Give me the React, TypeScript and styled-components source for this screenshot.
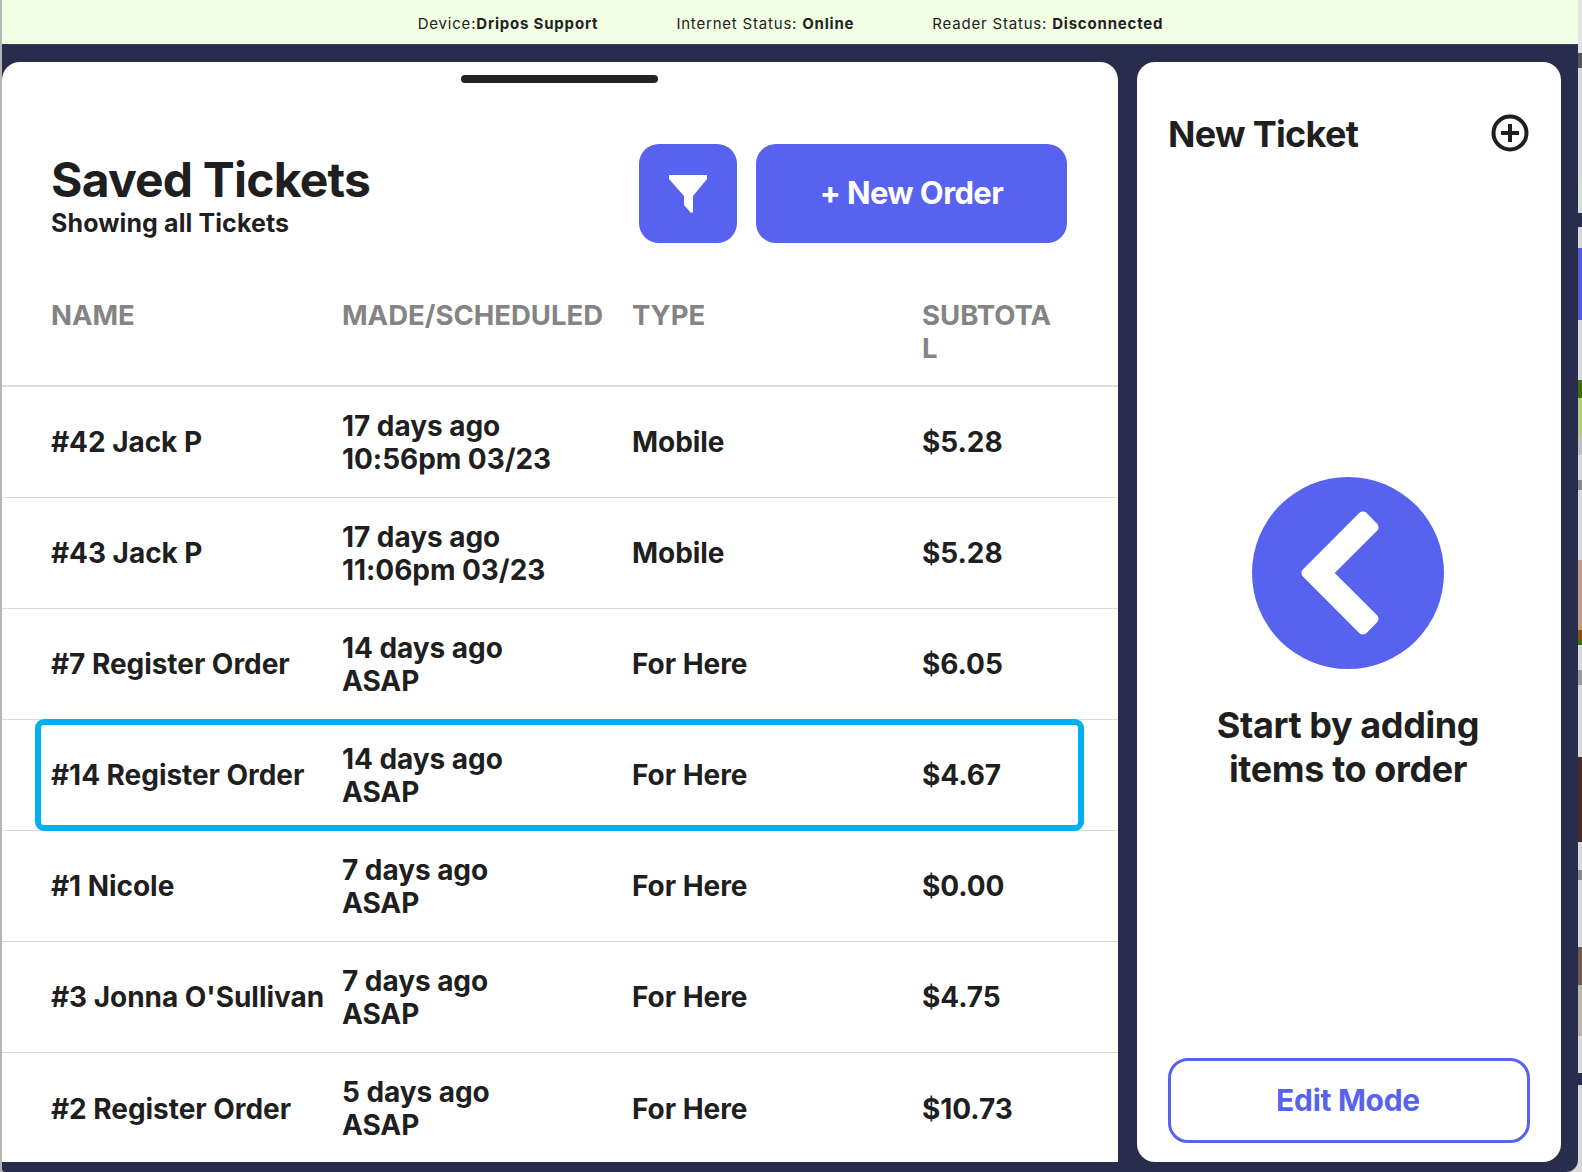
import React from "react";
import styled, { createGlobalStyle } from "styled-components";

const Global = createGlobalStyle`
  html, body { margin: 0; padding: 0; width: 1582px; height: 1172px; overflow: hidden; background: #d8d8d8; }
  * { box-sizing: border-box; }
  body { font-family: Inter, "Liberation Sans", sans-serif; color: #1f1f1f; }
`;

const Screen = styled.div`
  width: 1582px; height: 1172px; display: flex; background: #d8d8d8;
`;
const LeftEdge = styled.div`
  width: 2px; height: 1172px; flex: none; background: #b5b5b5;
`;
const Frame = styled.div`
  width: 1576px; height: 1172px; flex: none; display: flex; flex-direction: column;
  background: #292d4d; border-radius: 0 0 12px 3px; overflow: hidden;
`;
const Backdrop = styled.div`
  width: 4px; height: 1172px; flex: none; display: flex; flex-direction: column;
`;
const Strip = styled.div<{ $h: number; $c: string }>`
  height: ${(p) => p.$h}px; flex: none; background: ${(p) => p.$c};
`;
const StatusBar = styled.div`
  height: 45px; flex: none; background: #f1ffe4; display: flex; justify-content: center; gap: 78px;
  padding: 2px 0 0 1px; align-items: center; font-size: 15px; letter-spacing: 0.8px; color: #222;
  border-bottom: 1px solid #3a3d55;
`;
const Status = styled.div` b { font-weight: 700; } `;
const Panels = styled.div`
  display: flex; gap: 19px; padding-top: 17px; flex: 1; min-height: 0;
`;
const LeftPanel = styled.section`
  width: 1116px; height: 1100px; background: #fff; border-radius: 18px 18px 0 0; display: flex; flex-direction: column;
`;
const Handle = styled.div`
  width: 197px; height: 8px; border-radius: 4px; background: #222; margin: 13px 0 0 459px; flex: none;
`;
const Head = styled.div`
  display: flex; align-items: flex-start; padding: 61px 51px 0 50px; height: 150px; flex: none;
`;
const Titles = styled.div` flex: 1; padding: 11px 0 0 0; margin-left: -1px; `;
const Title = styled.h1`
  margin: 0; font-size: 48px; line-height: 50px; font-weight: 700; letter-spacing: -0.8px; color: #1f1f1f;
`;
const Sub = styled.div`
  margin-top: 5px; font-size: 25px; line-height: 26px; font-weight: 650; letter-spacing: 0.1px; color: #1f1f1f;
`;
const FilterButton = styled.div`
  width: 98px; height: 99px; border-radius: 20px; background: #5763ee; display: flex; align-items: center; justify-content: center;
`;
const NewOrder = styled.div`
  width: 311px; height: 99px; margin-left: 19px; border-radius: 20px; background: #5763ee; color: #fff;
  display: flex; align-items: center; justify-content: center; padding-bottom: 2px;
  font-size: 31px; font-weight: 700; letter-spacing: -0.6px;
`;
const Columns = styled.div`
  display: grid; grid-template-columns: 291px 290px 290px 1fr; padding: 0 50px 0 49px;
`;
const HeaderRow = styled(Columns)`
  height: 154px; flex: none; padding-top: 66px; border-bottom: 2px solid #dcdcdc;
  font-size: 27.5px; line-height: 33px; font-weight: 700; color: #848484;
`;
const HeaderCell = styled.div` word-break: break-all; padding-right: 10px; `;
const Row = styled(Columns)<{ $last?: boolean }>`
  height: 111px; flex: none; align-items: center; position: relative; padding-top: 1px;
  border-bottom: ${(p) => (p.$last ? "none" : "1px solid #d9d9d9")};
  font-size: 28px; line-height: 33px; font-weight: 650; letter-spacing: -0.05px; color: #1f1f1f;
`;
const Selection = styled.div`
  position: absolute; left: 33px; right: 34px; top: -1px; bottom: -1px;
  border: 6px solid #00b0ef; border-radius: 9px; pointer-events: none;
`;
const RightPanel = styled.aside`
  width: 424px; height: 1100px; background: #fff; border-radius: 18px; display: flex; flex-direction: column;
  padding: 0 31px 19px 31px;
`;
const TicketHead = styled.div`
  height: 142px; flex: none; display: flex; justify-content: space-between; align-items: flex-start; padding-top: 50px;
`;
const TicketTitle = styled.h2`
  margin: 0; font-size: 36px; line-height: 44px; font-weight: 700; letter-spacing: -0.7px; color: #1f1f1f;
`;
const PlusIcon = styled.svg`
  margin-top: 2px; margin-right: 1px;
`;
const Empty = styled.div`
  flex: 1; display: flex; flex-direction: column; align-items: center; padding: 273px 2px 0 0;
`;
const EmptyText = styled.div`
  margin-top: 34px; text-align: center; font-size: 36px; line-height: 44px; font-weight: 700; letter-spacing: -0.4px; color: #1f1f1f;
`;
const EditMode = styled.div`
  height: 85px; flex: none; border: 3px solid #5763ee; border-radius: 20px; color: #5763ee;
  display: flex; align-items: center; justify-content: center; padding: 0 2px 2px 0;
  font-size: 30px; font-weight: 700; letter-spacing: -0.3px;
`;

const rows = [
  ["#42 Jack P", "17 days ago", "10:56pm 03/23", "Mobile", "$5.28"],
  ["#43 Jack P", "17 days ago", "11:06pm 03/23", "Mobile", "$5.28"],
  ["#7 Register Order", "14 days ago", "ASAP", "For Here", "$6.05"],
  ["#14 Register Order", "14 days ago", "ASAP", "For Here", "$4.67"],
  ["#1 Nicole", "7 days ago", "ASAP", "For Here", "$0.00"],
  ["#3 Jonna O'Sullivan", "7 days ago", "ASAP", "For Here", "$4.75"],
  ["#2 Register Order", "5 days ago", "ASAP", "For Here", "$10.73"],
];

const strips: [number, string][] = [
  [53, "#e2e2e2"], [15, "#555"], [110, "#d8d8d8"], [35, "#d5dfcf"], [14, "#292d4d"], [21, "#d8d8d8"],
  [72, "#5560d0"], [60, "#d8d8d8"], [18, "#3f6b12"], [39, "#b7c98a"], [18, "#c0c0c0"],
  [25, "#d8d8d8"], [10, "#8a8a8a"], [70, "#d8d8d8"], [70, "#c39a7f"], [10, "#8a4a20"], [5, "#3f6b12"],
  [25, "#d8d8d8"], [15, "#9a9a9a"], [72, "#d8d8d8"], [85, "#4a2a1c"], [28, "#d8d8d8"], [10, "#8a8a8a"],
  [67, "#d8d8d8"], [38, "#6e5c48"], [51, "#bdb4a8"], [37, "#d8d8d8"], [12, "#292d4d"], [87, "#d8d8d8"],
];

export default function App() {
  return (
    <Screen>
      <Global />
      <LeftEdge />
      <Frame>
        <StatusBar>
          <Status>Device:<b>Dripos Support</b></Status>
          <Status>Internet Status: <b>Online</b></Status>
          <Status>Reader Status: <b>Disconnected</b></Status>
        </StatusBar>
        <Panels>
          <LeftPanel>
            <Handle />
            <Head>
              <Titles>
                <Title>Saved Tickets</Title>
                <Sub>Showing all Tickets</Sub>
              </Titles>
              <FilterButton>
                <svg width="38" height="38" viewBox="0 0 38 38"><path d="M0 0H38V4L24 21V37L22 38L15 30V21L0 4Z" fill="#fff" /></svg>
              </FilterButton>
              <NewOrder>+ New Order</NewOrder>
            </Head>
            <HeaderRow>
              <HeaderCell>NAME</HeaderCell>
              <HeaderCell>MADE/SCHEDULED</HeaderCell>
              <HeaderCell>TYPE</HeaderCell>
              <HeaderCell>SUBTOTAL</HeaderCell>
            </HeaderRow>
            {rows.map((r, i) => (
              <Row key={r[0]} $last={i === rows.length - 1}>
                <div>{r[0]}</div>
                <div>{r[1]}<br />{r[2]}</div>
                <div>{r[3]}</div>
                <div>{r[4]}</div>
                {i === 3 && <Selection />}
              </Row>
            ))}
          </LeftPanel>
          <RightPanel>
            <TicketHead>
              <TicketTitle>New Ticket</TicketTitle>
              <PlusIcon width="38" height="38" viewBox="0 0 38 38" fill="none" stroke="#1f1f1f" strokeWidth="4">
                <circle cx="19" cy="19" r="16.5" />
                <path d="M19 10V28M10 19H28" />
              </PlusIcon>
            </TicketHead>
            <Empty>
              <svg width="192" height="192" viewBox="0 0 192 192">
                <circle cx="96" cy="96" r="96" fill="#5763ee" />
                <path d="M54.4 96L111 39.4L121.5 50.2L75.7 96L121.5 141.8L111 152.6Z" fill="#fff" stroke="#fff" strokeWidth="10" strokeLinejoin="round" />
              </svg>
              <EmptyText>Start by adding<br />items to order</EmptyText>
            </Empty>
            <EditMode>Edit Mode</EditMode>
          </RightPanel>
        </Panels>
      </Frame>
      <Backdrop>
        {strips.map(([h, c], i) => (
          <Strip key={i} $h={h} $c={c} />
        ))}
      </Backdrop>
    </Screen>
  );
}
